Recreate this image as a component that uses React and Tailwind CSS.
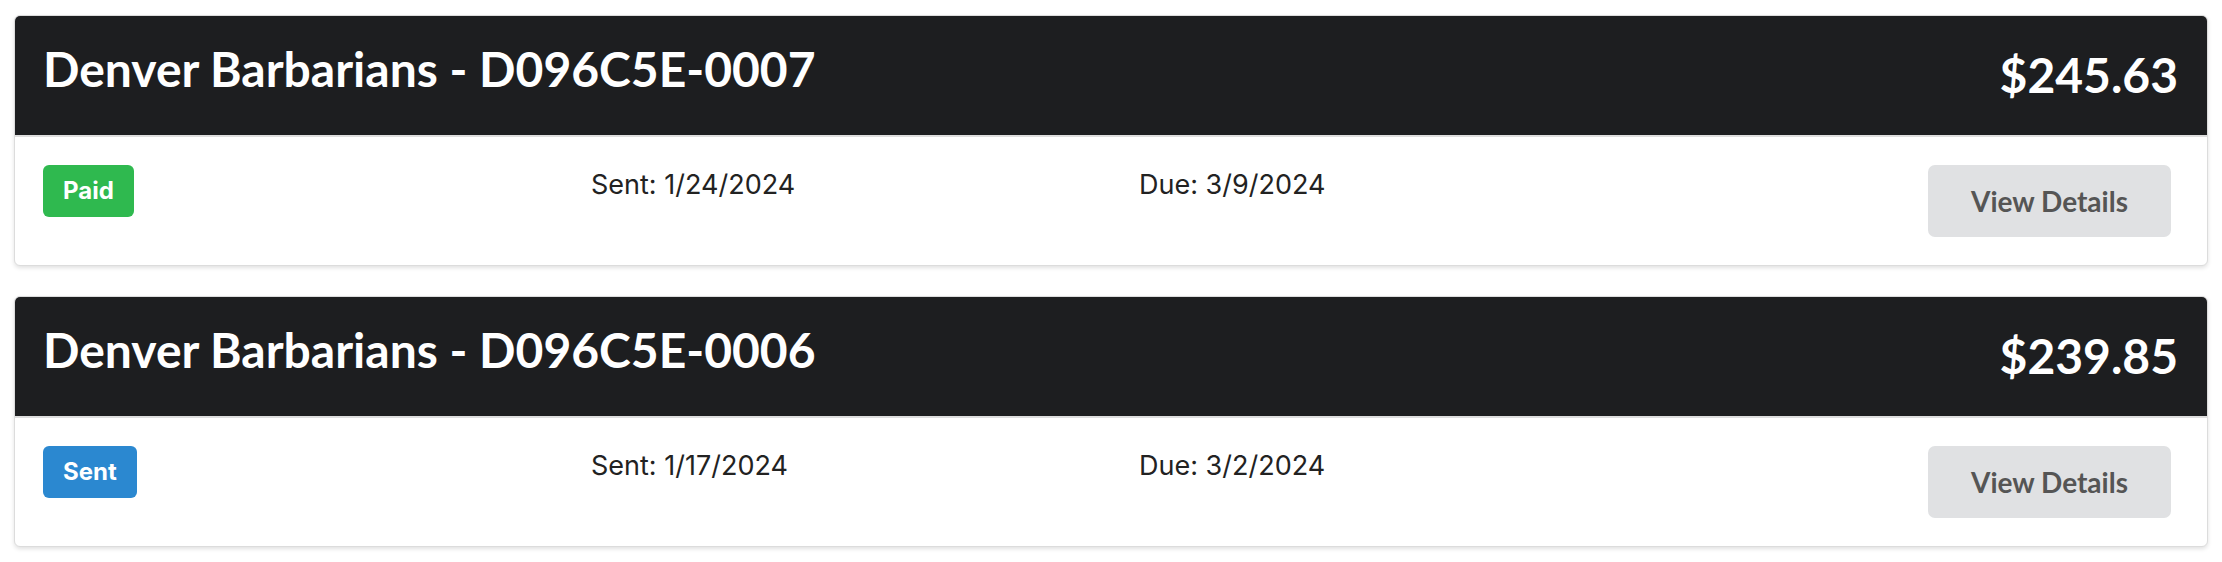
const INVOICES = [
  {
    id: "D096C5E-0007",
    team: "Denver Barbarians",
    amount: "$245.63",
    status: "Paid",
    sent: "1/24/2024",
    due: "3/9/2024",
  },
  {
    id: "D096C5E-0006",
    team: "Denver Barbarians",
    amount: "$239.85",
    status: "Sent",
    sent: "1/17/2024",
    due: "3/2/2024",
  },
];

const STATUS_STYLES = {
  Paid: "bg-[#2fb94f]",
  Sent: "bg-[#2b88d0]",
};

function InvoiceCard({ invoice }) {
  return (
    <div className="bg-white border border-[#dcdcdc] rounded-[6px] shadow-[0_2px_4px_rgba(0,0,0,0.12)] overflow-hidden">
      {/* header */}
      <div className="bg-[#1d1e20] border-b-2 border-[#dedede] flex justify-between items-start pl-[28px] pr-[29px] pt-[24px] h-[121px]">
        <h2 className="text-white font-bold text-[48px] leading-[1.2] font-['Lato',sans-serif]">
          {invoice.team} - {invoice.id}
        </h2>
        <div className="text-white font-bold text-[48px] leading-[1.2] mt-[6px] font-['Lato',sans-serif]">
          {invoice.amount}
        </div>
      </div>

      {/* body */}
      <div className="grid grid-cols-[548px_548px_1fr_auto] items-start pl-[28px] pr-[36px] py-[28px] font-['Inter',sans-serif]">
        <div>
          <span
            className={`inline-flex items-center justify-center h-[52px] px-[20px] rounded-[6px] text-white font-bold text-[24px] ${STATUS_STYLES[invoice.status]}`}
          >
            {invoice.status}
          </span>
        </div>
        <div className="text-[#222] text-[27px] leading-[1.5]">
          Sent: {invoice.sent}
        </div>
        <div className="text-[#222] text-[27px] leading-[1.5]">
          Due: {invoice.due}
        </div>
        <button className="w-[243px] h-[72px] rounded-[7px] bg-[#e0e1e3] text-[#555] font-bold text-[28px] font-['Lato',sans-serif]">
          View Details
        </button>
      </div>
    </div>
  );
}

export default function App() {
  return (
    <div className="bg-white min-h-[562px] px-[14px] pt-[15px] flex flex-col gap-[30px]">
      {INVOICES.map((inv) => (
        <InvoiceCard key={inv.id} invoice={inv} />
      ))}
    </div>
  );
}
